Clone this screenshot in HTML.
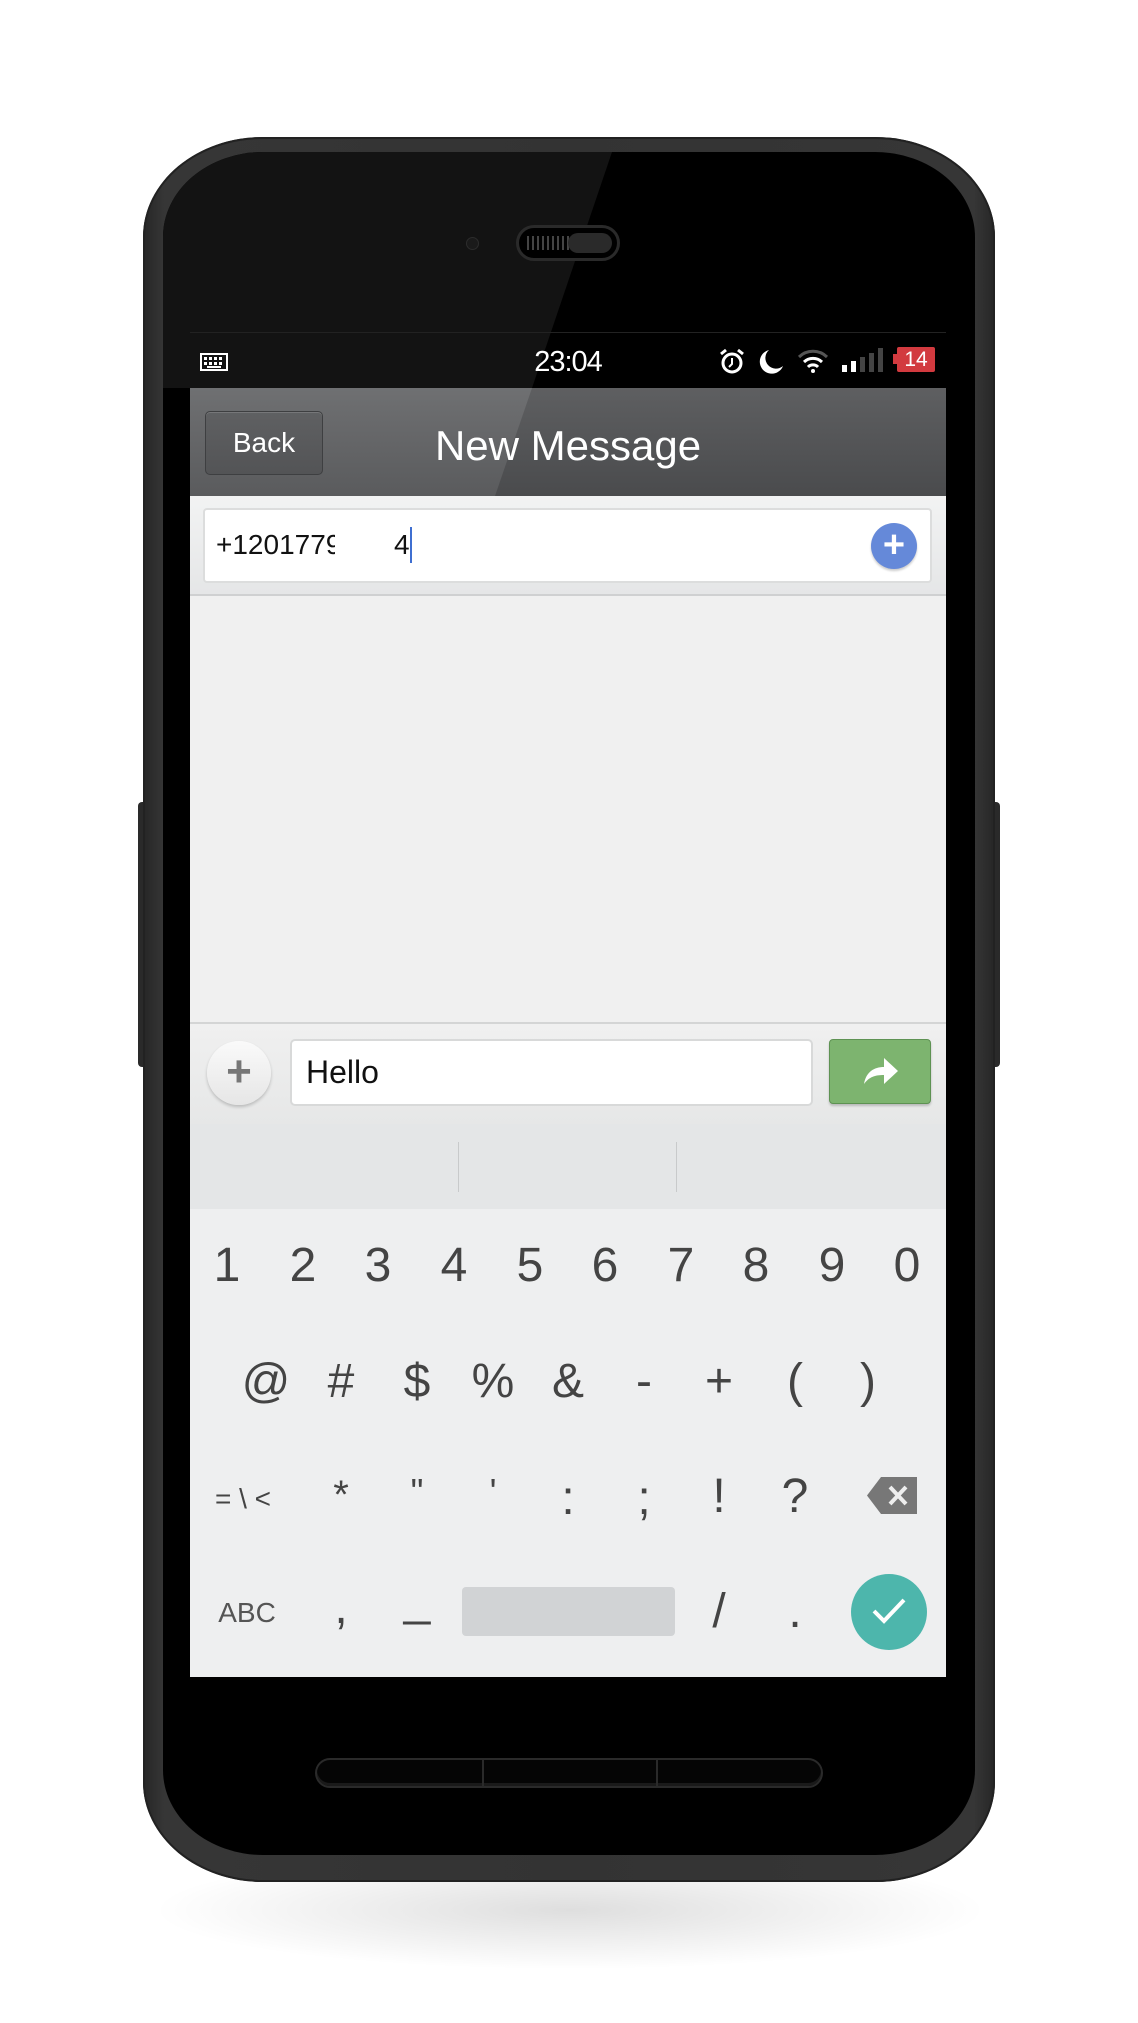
<!DOCTYPE html>
<html><head><meta charset="utf-8"><style>
*{margin:0;padding:0;box-sizing:border-box}
body{width:1138px;height:2023px;background:#fff;position:relative;overflow:hidden;font-family:"Liberation Sans",sans-serif}
.a{position:absolute}
.k{position:absolute;transform:translate(-50%,-50%);color:#444;font-size:48px;line-height:1}
</style></head><body>
<div class="a" style="left:150px;top:1850px;width:840px;height:120px;border-radius:50%;background:radial-gradient(ellipse,rgba(0,0,0,.13),rgba(0,0,0,0) 70%)"></div>
<div class="a" style="left:138px;top:802px;width:10px;height:265px;background:#2a2a2a;border-radius:4px"></div>
<div class="a" style="left:990px;top:802px;width:10px;height:265px;background:#2a2a2a;border-radius:4px"></div>
<div class="a" style="left:143px;top:137px;width:852px;height:1745px;border-radius:120px/100px;background:linear-gradient(90deg,#262626,#363636 2.5%,#333 50%,#363636 97.5%,#262626);box-shadow:inset 0 0 0 2px #222"></div>
<div class="a" style="left:163px;top:152px;width:812px;height:1703px;border-radius:100px/85px;background:#000;overflow:hidden">
  <div class="a" style="left:0;top:0;width:812px;height:240px;background:#131313;clip-path:polygon(0 0,449px 0,369px 236px,0 236px)"></div>
</div>
<div class="a" style="left:466px;top:237px;width:13px;height:13px;border-radius:50%;background:#1a1a1a;border:1px solid #2c2c2c"></div>
<div class="a" style="left:516px;top:225px;width:104px;height:36px;border-radius:18px;background:#000;border:3px solid #2a2a2a"></div>
<div class="a" style="left:527px;top:236px;width:44px;height:14px;background:repeating-linear-gradient(90deg,#555 0 2px,transparent 2px 5px);opacity:.8"></div>
<div class="a" style="left:568px;top:233px;width:44px;height:20px;border-radius:10px;background:#2a2a2a"></div>
<div class="a" style="left:190px;top:332px;width:756px;height:1px;background:#222"></div>
<!-- status -->
<svg class="a" style="left:200px;top:353px" width="28" height="18" viewBox="0 0 28 18"><rect x="1" y="1" width="26" height="16" fill="none" stroke="#fff" stroke-width="2"/><g fill="#fff"><rect x="4" y="4" width="3" height="3"/><rect x="9" y="4" width="3" height="3"/><rect x="14" y="4" width="3" height="3"/><rect x="19" y="4" width="3" height="3"/><rect x="4" y="9" width="3" height="3"/><rect x="9" y="9" width="3" height="3"/><rect x="14" y="9" width="3" height="3"/><rect x="19" y="9" width="3" height="3"/><rect x="7" y="13" width="14" height="2"/></g></svg>
<div class="a" style="left:520px;top:346px;width:96px;text-align:center;color:#fff;font-size:29px;letter-spacing:-1px">23:04</div>
<svg class="a" style="left:718px;top:348px" width="28" height="26" viewBox="0 0 28 26"><circle cx="14" cy="15" r="9" fill="none" stroke="#fff" stroke-width="3"/><path d="M14 10v6l-3 3" stroke="#fff" stroke-width="2" fill="none"/><path d="M3 6l5-4M25 6l-5-4" stroke="#fff" stroke-width="3"/></svg>
<svg class="a" style="left:757px;top:349px" width="27" height="25" viewBox="0 0 27 25"><path d="M12 1a12 12 0 1 0 14 16A10 10 0 0 1 12 1z" fill="#fff"/></svg>
<svg class="a" style="left:796px;top:348px" width="34" height="26" viewBox="0 0 34 26"><path d="M3 9a20 20 0 0 1 28 0" stroke="#555" stroke-width="3" fill="none"/><path d="M8 14a13 13 0 0 1 18 0M12 19a7 7 0 0 1 10 0" stroke="#fff" stroke-width="3" fill="none"/><circle cx="17" cy="23" r="2" fill="#fff"/></svg>
<svg class="a" style="left:842px;top:348px" width="42" height="24" viewBox="0 0 42 24"><rect x="0" y="17" width="5" height="7" fill="#fff"/><rect x="9" y="13" width="5" height="11" fill="#fff"/><rect x="18" y="9" width="5" height="15" fill="#444"/><rect x="27" y="5" width="5" height="19" fill="#444"/><rect x="36" y="0" width="5" height="24" fill="#444"/></svg>
<div class="a" style="left:893px;top:354px;width:4px;height:10px;background:#d23a3f"></div>
<div class="a" style="left:897px;top:347px;width:38px;height:25px;background:#d23a3f;border-radius:2px;color:#fff;font-size:21px;line-height:25px;text-align:center">14</div>
<!-- screen -->
<div class="a" style="left:190px;top:388px;width:756px;height:1289px;background:#f0f0f0;overflow:hidden">
  <div class="a" style="left:0;top:0;width:756px;height:108px;background:linear-gradient(#5e5f61,#4a4b4d)"></div>
  <div class="a" style="left:0;top:0;width:756px;height:108px;background:linear-gradient(#6f7072,#5a5b5d);clip-path:polygon(0 0,342px 0,305px 108px,0 108px)"></div>
  <div class="a" style="left:15px;top:23px;width:118px;height:64px;border-radius:5px;background:linear-gradient(#5f6062,#535456);border:1px solid #3e3f41;box-shadow:inset 0 1px 0 rgba(255,255,255,.15);color:#fff;font-size:28px;line-height:62px;text-align:center">Back</div>
  <div class="a" style="left:0;top:25px;width:756px;text-align:center;color:#fff;font-size:42px;line-height:66px">New Message</div>
  <div class="a" style="left:0;top:108px;width:756px;height:100px;background:linear-gradient(#f2f3f3,#e5e6e7);border-bottom:2px solid #cfd0d1"></div>
  <div class="a" style="left:13px;top:120px;width:729px;height:75px;background:#fff;border:2px solid #dcdddd;border-radius:4px"></div>
  <div class="a" style="left:26px;top:138px;color:#111;font-size:28px;line-height:38px">+1201779</div>
  <div class="a" style="left:145px;top:136px;width:58px;height:42px;background:#fff"></div>
  <div class="a" style="left:204px;top:138px;color:#111;font-size:28px;line-height:38px">4</div>
  <div class="a" style="left:220px;top:139px;width:2px;height:36px;background:#3f6fd1"></div>
  <div class="a" style="left:681px;top:135px;width:46px;height:46px;border-radius:50%;background:#6589d9;box-shadow:0 2px 2px rgba(0,0,0,.2);color:#fff;font-size:38px;font-weight:bold;text-align:center;line-height:45px">+</div>
  <!-- input bar -->
  <div class="a" style="left:0;top:634px;width:756px;height:102px;background:linear-gradient(#f0f0f0,#e6e7e7);border-top:2px solid #d4d5d5"></div>
  <div class="a" style="left:17px;top:653px;width:64px;height:64px;border-radius:50%;background:linear-gradient(#fafafa,#e6e6e6);box-shadow:0 2px 3px rgba(0,0,0,.2);color:#777;font-size:44px;font-weight:bold;text-align:center;line-height:62px">+</div>
  <div class="a" style="left:100px;top:651px;width:523px;height:67px;background:#fff;border:2px solid #d8d9d9;border-radius:5px;color:#111;font-size:32px;line-height:63px;padding-left:14px">Hello</div>
  <div class="a" style="left:639px;top:651px;width:102px;height:65px;background:#7db46f;border:1px solid #5e9253;border-radius:4px;box-shadow:0 2px 2px rgba(0,0,0,.2)"></div>
  <svg class="a" style="left:672px;top:668px" width="38" height="30" viewBox="0 0 38 30"><path d="M2 28C4 16 12 11 22 11V2l14 13-14 13v-9C13 19 7 21 2 28z" fill="#fff"/></svg>
  <div class="a" style="left:0;top:736px;width:756px;height:85px;background:#e4e6e7"></div>
  <div class="a" style="left:268px;top:754px;width:1px;height:50px;background:#c8cacb"></div>
  <div class="a" style="left:486px;top:754px;width:1px;height:50px;background:#c8cacb"></div>
  <div class="a" style="left:0;top:821px;width:756px;height:468px;background:#eeeff0"></div>
  <div class="a" style="left:272px;top:1199px;width:213px;height:49px;background:#d1d3d5;border-radius:4px"></div>
</div>
<!-- keys -->
<div class="k" style="left:227px;top:1266px">1</div><div class="k" style="left:303px;top:1266px">2</div><div class="k" style="left:378px;top:1266px">3</div><div class="k" style="left:454px;top:1266px">4</div><div class="k" style="left:530px;top:1266px">5</div><div class="k" style="left:605px;top:1266px">6</div><div class="k" style="left:681px;top:1266px">7</div><div class="k" style="left:756px;top:1266px">8</div><div class="k" style="left:832px;top:1266px">9</div><div class="k" style="left:907px;top:1266px">0</div>
<div class="k" style="left:266px;top:1382px">@</div><div class="k" style="left:341px;top:1382px">#</div><div class="k" style="left:417px;top:1382px">$</div><div class="k" style="left:493px;top:1382px">%</div><div class="k" style="left:568px;top:1382px">&amp;</div><div class="k" style="left:644px;top:1382px">-</div><div class="k" style="left:719px;top:1382px">+</div><div class="k" style="left:795px;top:1382px">(</div><div class="k" style="left:868px;top:1382px">)</div>
<div class="k" style="left:243px;top:1499px;font-size:28px">= \ &lt;</div><div class="k" style="left:341px;top:1495px;font-size:40px">*</div><div class="k" style="left:417px;top:1492px;font-size:36px">"</div><div class="k" style="left:493px;top:1492px;font-size:36px">'</div><div class="k" style="left:568px;top:1499px">:</div><div class="k" style="left:644px;top:1499px">;</div><div class="k" style="left:719px;top:1497px">!</div><div class="k" style="left:795px;top:1497px">?</div>
<svg class="a" style="left:867px;top:1477px" width="52" height="37" viewBox="0 0 52 37"><path d="M14 0h36v37H14L0 18.5z" fill="#777"/><path d="M23 10l16 17M39 10L23 27" stroke="#eee" stroke-width="4"/></svg>
<div class="k" style="left:247px;top:1613px;font-size:28px;color:#555">ABC</div><div class="k" style="left:341px;top:1608px">,</div><div class="k" style="left:417px;top:1600px">_</div><div class="k" style="left:719px;top:1612px">/</div><div class="k" style="left:795px;top:1612px">.</div>
<div class="a" style="left:851px;top:1574px;width:76px;height:76px;border-radius:50%;background:#4db6ac"></div>
<svg class="a" style="left:871px;top:1596px" width="36" height="30" viewBox="0 0 36 30"><path d="M3 15l10 10L33 4" stroke="#fff" stroke-width="4" fill="none"/></svg>
<!-- home bar -->
<div class="a" style="left:315px;top:1758px;width:508px;height:30px;border-radius:15px;background:#050505;border:2px solid #2a2a2a;box-shadow:inset 0 -3px 0 #1a1a1a"></div>
<div class="a" style="left:482px;top:1760px;width:2px;height:26px;background:#2a2a2a"></div>
<div class="a" style="left:656px;top:1760px;width:2px;height:26px;background:#2a2a2a"></div>
</body></html>
